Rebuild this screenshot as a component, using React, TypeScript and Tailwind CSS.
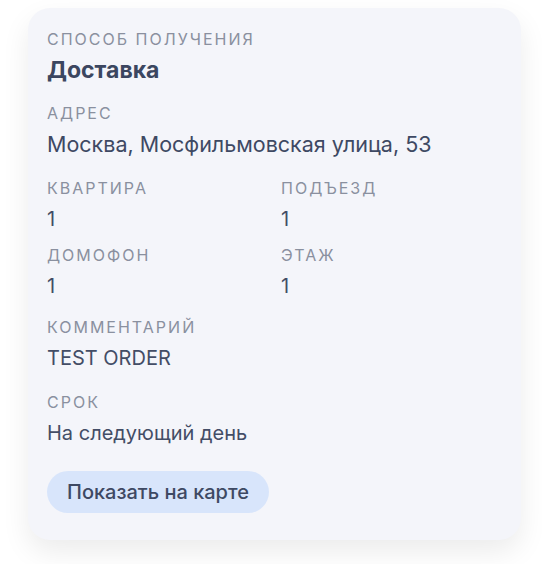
import React from "react";

const Label = ({ children }: { children: React.ReactNode }) => (
  <div className="text-[16px] leading-[20px] tracking-[2px] uppercase text-[#8a909f]">{children}</div>
);

const Value = ({ children, big }: { children: React.ReactNode; big?: boolean }) => (
  <div
    className={
      big
        ? "mt-[8px] text-[21.5px] leading-[27px] text-[#3e4963]"
        : "mt-[8px] text-[20px] leading-[26px] text-[#434d66]"
    }
  >
    {children}
  </div>
);

export default function App() {
  return (
    <div className="min-h-[564px] bg-white pt-[8px] pl-[28px]" style={{ fontFamily: "Inter, 'Noto Sans', sans-serif" }}>
      <div className="w-[493px] rounded-[22px] bg-[#f4f5fa] px-[19px] pt-[21px] pb-[27px] shadow-[0_12px_28px_rgba(0,0,0,0.08)]">
        <Label>Способ получения</Label>
        <div className="mt-[7px] text-[23px] leading-[29px] font-bold text-[#3b4660]">Доставка</div>

        <div className="mt-[18px]">
          <Label>Адрес</Label>
          <Value big>Москва, Мосфильмовская улица, 53</Value>
        </div>

        <div className="mt-[20px] grid grid-cols-[221px_1fr] gap-x-[13px] gap-y-[13px]">
          <div>
            <Label>Квартира</Label>
            <Value>1</Value>
          </div>
          <div>
            <Label>Подъезд</Label>
            <Value>1</Value>
          </div>
          <div>
            <Label>Домофон</Label>
            <Value>1</Value>
          </div>
          <div>
            <Label>Этаж</Label>
            <Value>1</Value>
          </div>
        </div>

        <div className="mt-[18px]">
          <Label>Комментарий</Label>
          <Value>TEST ORDER</Value>
        </div>

        <div className="mt-[21px]">
          <Label>Срок</Label>
          <Value>На следующий день</Value>
        </div>

        <button className="mt-[25px] flex h-[42px] items-center rounded-full bg-[#d8e5fb] px-[20px] text-[20px] font-medium text-[#3e4963]">
          Показать на карте
        </button>
      </div>
    </div>
  );
}
